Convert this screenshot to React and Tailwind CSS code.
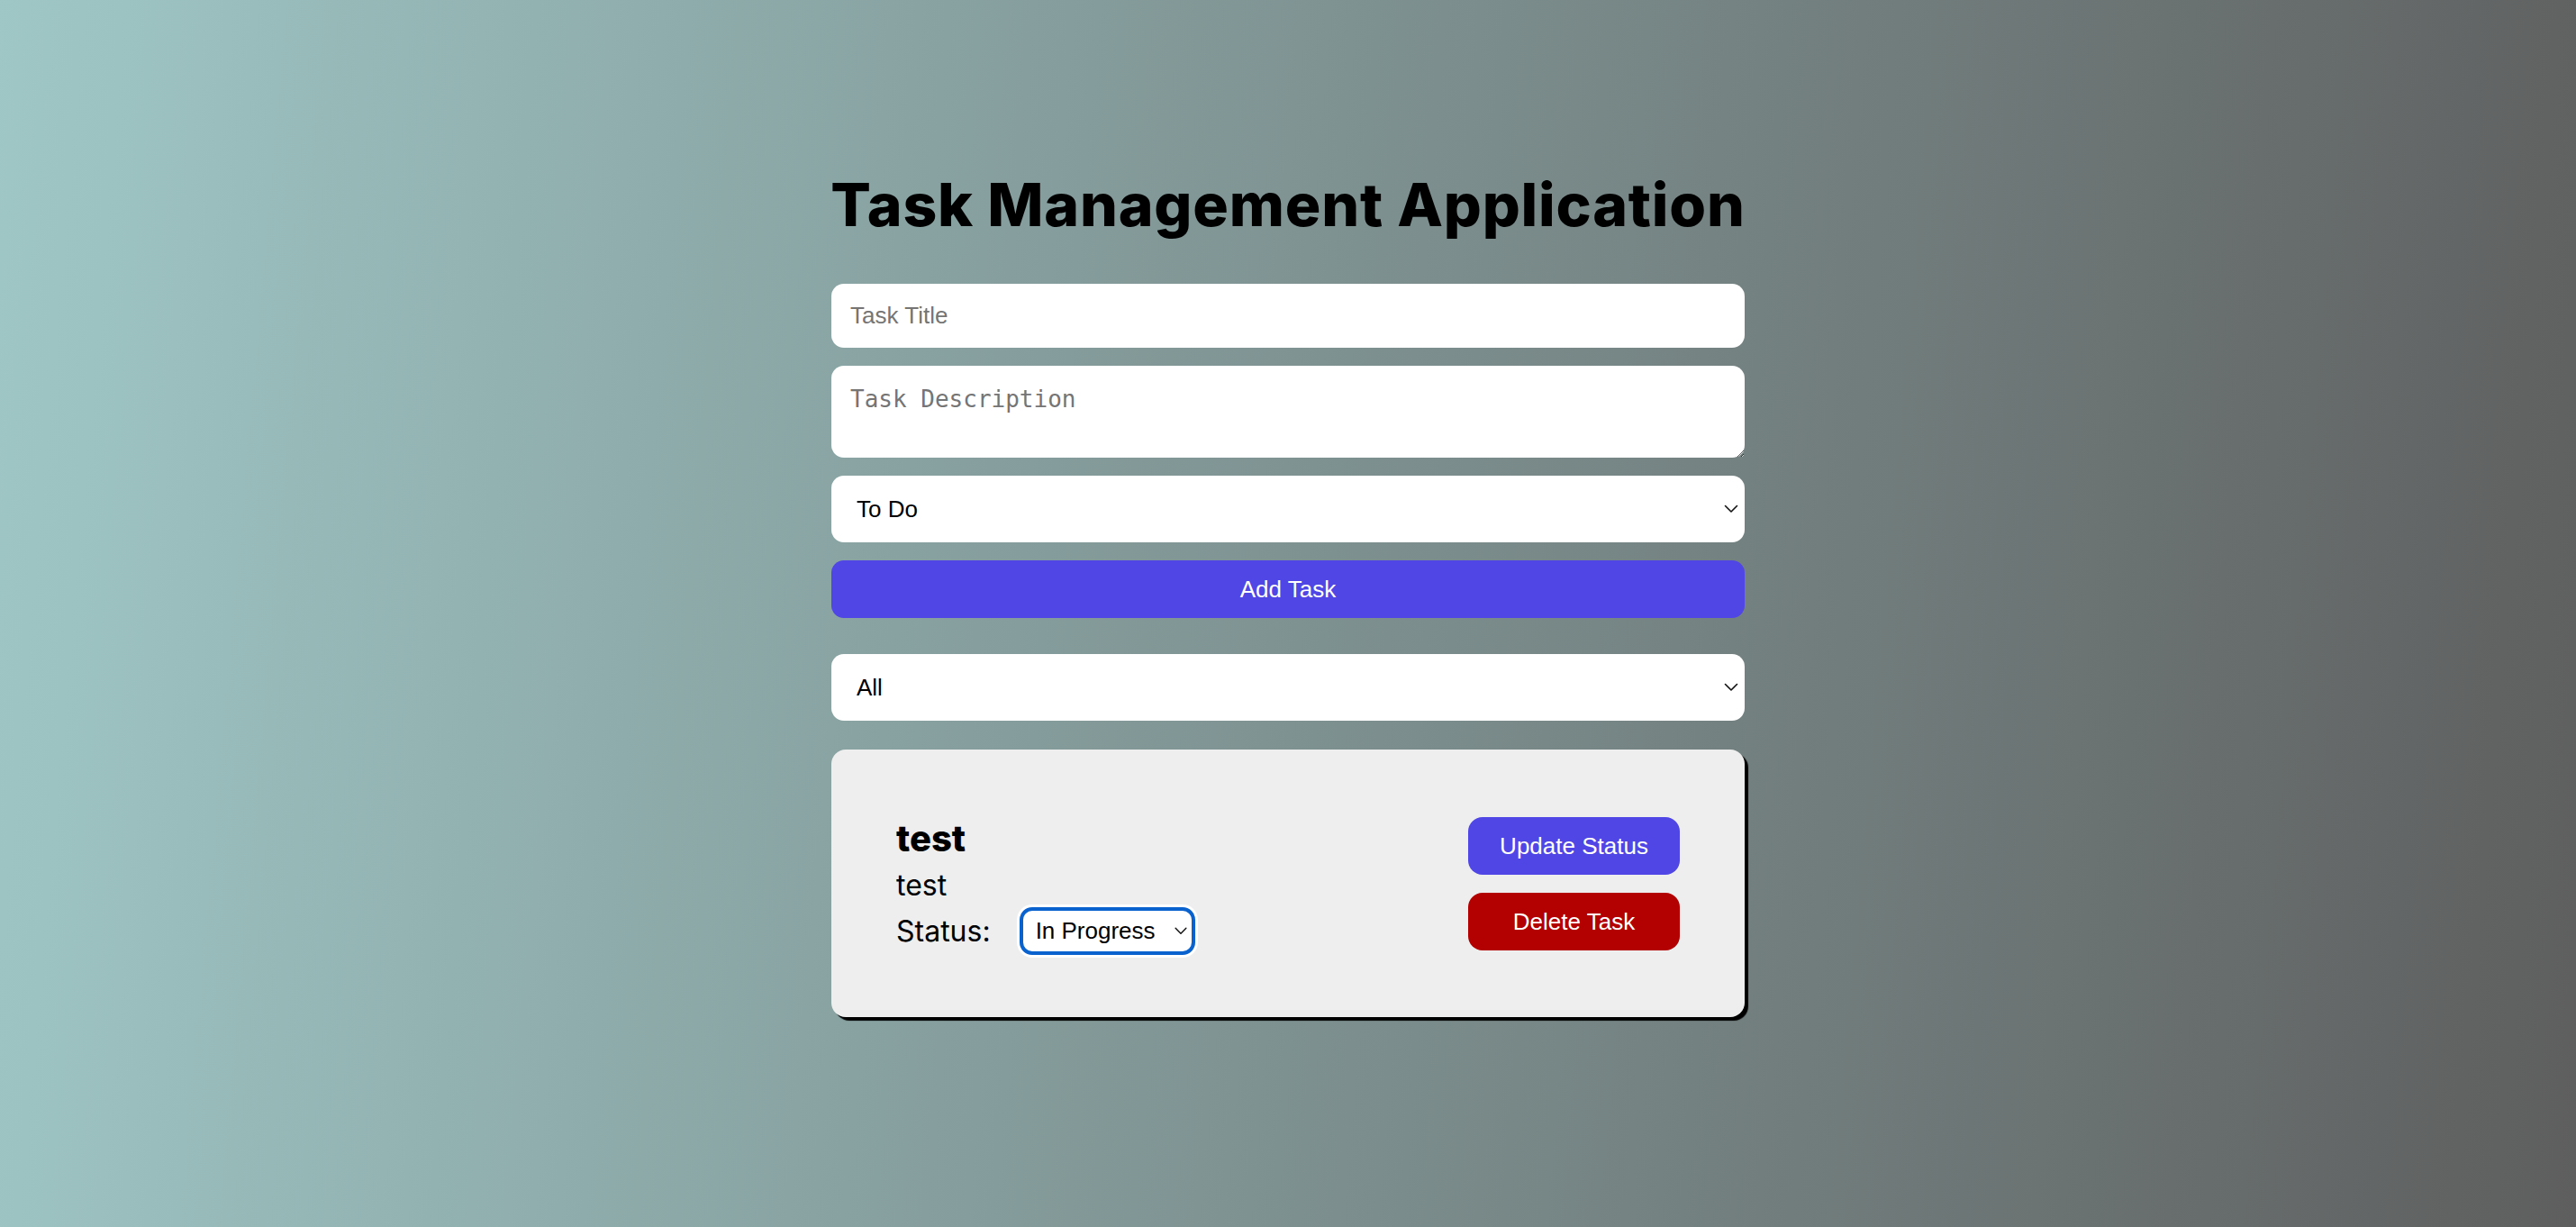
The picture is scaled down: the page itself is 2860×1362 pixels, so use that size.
import React, { useState } from 'react';

const Chevron = ({ className }) => (
  <svg className={className} viewBox="0 0 16 10" fill="none" stroke="#111" strokeWidth="1.6" strokeLinecap="round" strokeLinejoin="round">
    <path d="M1.5 1.5 L8 8 L14.5 1.5" />
  </svg>
);

const App = () => {
  const [title, setTitle] = useState('');
  const [description, setDescription] = useState('');
  const [status, setStatus] = useState('To Do');
  const [filter, setFilter] = useState('All');
  const [tasks, setTasks] = useState([
    { id: 1, title: 'test', description: 'test', status: 'In Progress' },
  ]);

  const addTask = () => {
    if (!title.trim()) return;
    setTasks([...tasks, { id: Date.now(), title, description, status }]);
    setTitle('');
    setDescription('');
  };

  const updateStatus = (id, value) => {
    setTasks(tasks.map((t) => (t.id === id ? { ...t, status: value } : t)));
  };

  const visible = tasks.filter((t) => filter === 'All' || t.status === filter);

  return (
    <div className="min-h-screen w-full bg-[linear-gradient(95deg,#9fc7c6_0%,#5e5e5e_100%)]">
      <div className="mx-auto w-[1014px] pt-[195px] pb-[120px]">
        {/* Title */}
        <h1 className="-mx-[20px] mb-[56px] whitespace-nowrap text-center font-['Inter',sans-serif] text-[66px] font-extrabold leading-[64px] tracking-[0.8px] text-black">
          Task Management Application
        </h1>

        {/* Form */}
        <div className="flex flex-col gap-[20px] font-['Liberation_Sans',Arial,sans-serif]">
          <input
            type="text"
            value={title}
            onChange={(e) => setTitle(e.target.value)}
            placeholder="Task Title"
            className="h-[71px] w-full rounded-[14px] bg-white px-[21px] text-[26px] text-black outline-none placeholder:text-[#757575]"
          />
          <textarea
            value={description}
            onChange={(e) => setDescription(e.target.value)}
            placeholder="Task Description"
            className="block h-[102px] w-full resize rounded-[14px] bg-white px-[21px] pt-[21px] font-['DejaVu_Sans_Mono',monospace] text-[26px] leading-[32px] text-black outline-none placeholder:text-[#757575]"
          />
          <div className="relative">
            <select
              value={status}
              onChange={(e) => setStatus(e.target.value)}
              className="h-[74px] w-full appearance-none rounded-[14px] bg-white pl-[28px] text-[26px] text-black outline-none"
            >
              <option>To Do</option>
              <option>In Progress</option>
              <option>Done</option>
            </select>
            <Chevron className="pointer-events-none absolute right-[6px] top-[32px] h-[10px] w-[18px]" />
          </div>
          <button
            onClick={addTask}
            className="h-[64px] w-full rounded-[14px] bg-[#4f46e5] text-[26px] text-white"
          >
            Add Task
          </button>
        </div>

        {/* Filter */}
        <div className="relative mt-[40px] font-['Liberation_Sans',Arial,sans-serif]">
          <select
            value={filter}
            onChange={(e) => setFilter(e.target.value)}
            className="h-[74px] w-full appearance-none rounded-[14px] bg-white pl-[28px] text-[26px] text-black outline-none"
          >
            <option>All</option>
            <option>To Do</option>
            <option>In Progress</option>
            <option>Done</option>
          </select>
          <Chevron className="pointer-events-none absolute right-[6px] top-[32px] h-[10px] w-[18px]" />
        </div>

        {/* Task list */}
        <div className="mt-[32px] flex flex-col gap-[32px]">
          {visible.map((task) => (
            <div
              key={task.id}
              className="flex items-start justify-between rounded-[16px] bg-[#eeeeee] px-[72px] pt-[75px] pb-[69px] shadow-[4px_4px_1px_#000]"
            >
              <div className="font-['Inter',sans-serif] text-black">
                <h3 className="text-[40px] font-extrabold leading-[48px]">{task.title}</h3>
                <p className="mt-[3px] text-[32px] leading-[49px]">{task.description}</p>
                <div className="flex items-center gap-[32px]">
                  <span className="text-[32px] leading-[49px]">Status:</span>
                  <div className="relative">
                    <select
                      value={task.status}
                      onChange={(e) => updateStatus(task.id, e.target.value)}
                      className="h-[53px] w-[195px] appearance-none rounded-[14px] border-4 border-[#0a62cf] bg-white pl-[14px] font-['Liberation_Sans',Arial,sans-serif] text-[26px] text-black shadow-[0_0_0_3px_#fff] outline-none"
                    >
                      <option>To Do</option>
                      <option>In Progress</option>
                      <option>Done</option>
                    </select>
                    <Chevron className="pointer-events-none absolute right-[8px] top-[22px] h-[9px] w-[16px]" />
                  </div>
                </div>
              </div>

              <div className="flex flex-col gap-[20px] font-['Liberation_Sans',Arial,sans-serif]">
                <button className="h-[64px] w-[235px] rounded-[16px] bg-[#4f46e5] text-[26px] text-white">
                  Update Status
                </button>
                <button
                  onClick={() => setTasks(tasks.filter((t) => t.id !== task.id))}
                  className="h-[64px] w-[235px] rounded-[16px] bg-[#b30000] text-[26px] text-white"
                >
                  Delete Task
                </button>
              </div>
            </div>
          ))}
        </div>
      </div>
    </div>
  );
};

export default App;
